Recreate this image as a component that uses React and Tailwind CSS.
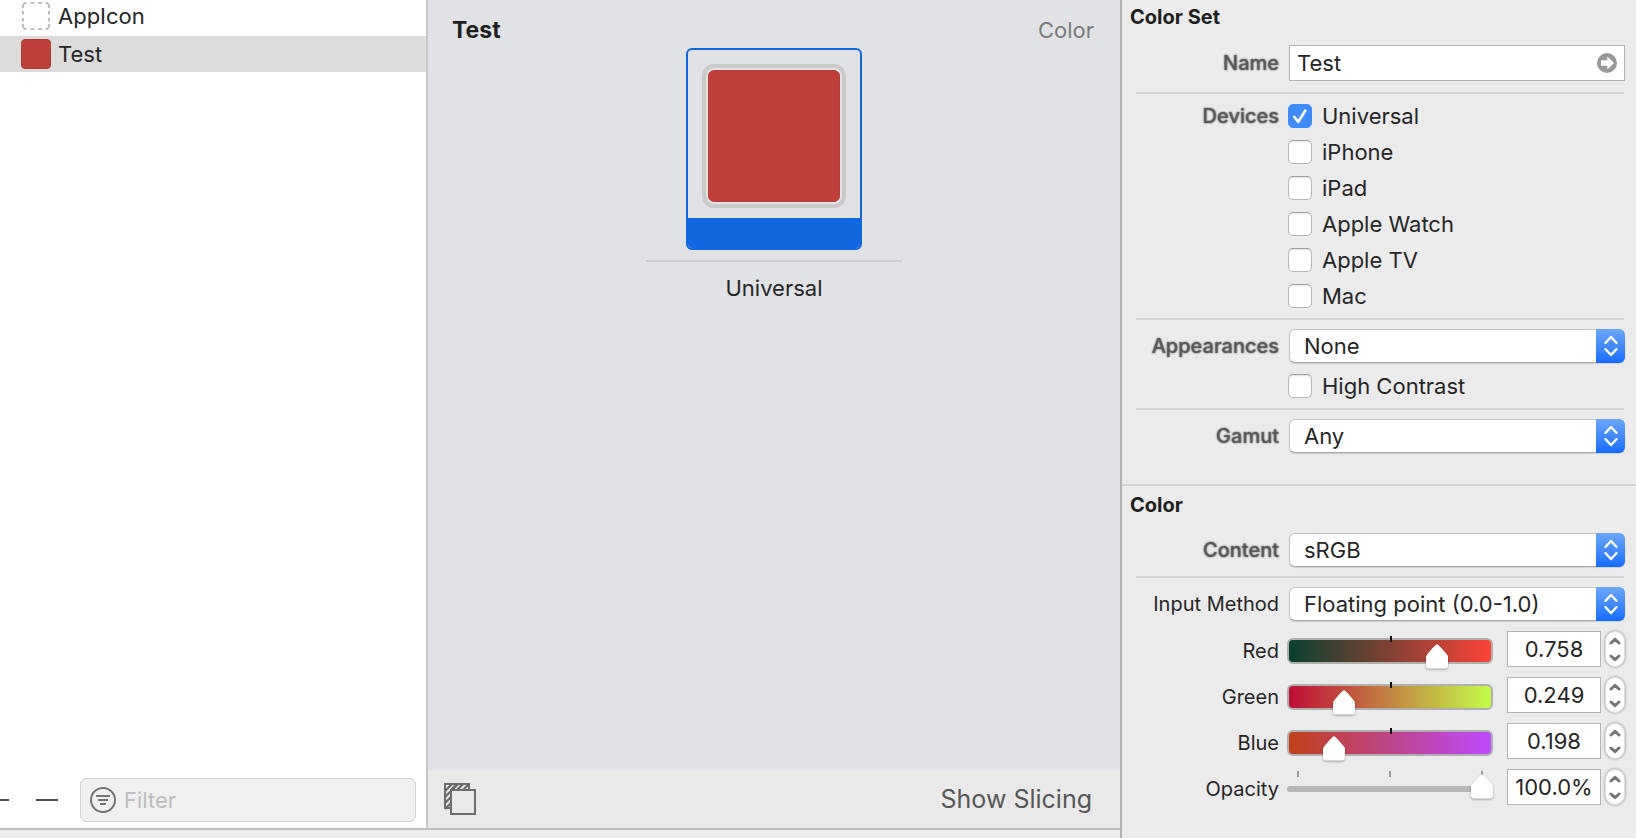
import { useState } from "react";

const font = "font-['Inter','Liberation_Sans',sans-serif]";

function Label({ children, htmlFor, soft }) {
  const tone = soft
    ? "text-[#555555]/30 [text-shadow:0_0_1px_#555555,0_0_2px_#777777] font-medium"
    : "text-[#262626]";
  return (
    <label htmlFor={htmlFor} className={`w-[157px] shrink-0 text-right text-xl leading-6 ${tone}`}>
      {children}
    </label>
  );
}

function Divider() {
  return <hr className="ml-[14px] mr-3 h-[2px] border-0 bg-[#d4d4d4]" />;
}

function SelectRow({ id, label, soft, options }) {
  return (
    <div className="flex h-[34px] items-center pr-[11px]">
      <Label htmlFor={id} soft={soft}>{label}</Label>
      <div className="relative ml-[10px] h-[34px] min-w-0 flex-1">
        <select
          id={id}
          className="h-full w-full appearance-none rounded-md border border-[#c4c4c4] border-b-[#a8a8a8] bg-white pl-[14px] pr-8 text-[22px] leading-7 text-[#262626] shadow-[0_1px_1px_rgba(0,0,0,0.12)] outline-none"
        >
          {options.map((o) => (
            <option key={o}>{o}</option>
          ))}
        </select>
        <span className="pointer-events-none absolute inset-y-0 right-0 flex w-[29px] items-center justify-center rounded-r-md bg-linear-to-b from-[#6ba6f8] to-[#146bfe]">
          <svg width="14" height="22" viewBox="0 0 14 22" fill="none" stroke="#fff" strokeWidth="2.4" strokeLinecap="round" strokeLinejoin="round">
            <path d="M1.600 7.800 7 2 12.400 7.800M1.600 14.200 7 20 12.400 14.200" />
          </svg>
        </span>
      </div>
    </div>
  );
}

function CheckRow({ id, label, defaultChecked }) {
  return (
    <div className="flex h-9 items-center">
      <span className="relative flex h-6 w-6">
        <input
          id={id}
          type="checkbox"
          defaultChecked={defaultChecked}
          className="peer h-6 w-6 appearance-none rounded-[5px] border border-[#b9b9b9] border-t-[#9f9f9f] bg-white shadow-[inset_0_1px_2px_rgba(0,0,0,0.12)] checked:border-[#3f8af9] checked:bg-[#408bfa] checked:shadow-none"
        />
        <svg className="pointer-events-none absolute inset-0 hidden peer-checked:block" width="24" height="24" viewBox="0 0 24 24" fill="none" stroke="#fff" strokeWidth="2.6" strokeLinecap="round" strokeLinejoin="round">
          <path d="M6.300 13 10.300 17.800 17.300 6.500" />
        </svg>
      </span>
      <label htmlFor={id} className="ml-[10px] text-[22px] leading-7 text-[#262626]">{label}</label>
    </div>
  );
}

function Thumb({ value, className }) {
  return (
    <svg
      className={`pointer-events-none absolute overflow-visible drop-shadow-[0_1px_1px_rgba(0,0,0,0.35)] ${className}`}
      style={{ left: `calc(${value} * (100% - 22px))` }}
      width="22"
      height="25"
      viewBox="0 0 22 25"
      fill="#fff"
    >
      <path d="M11 .3c.5 0 .9.300 1.300.700C16 4.500 19 7.800 21.400 11.300c.4.600.6 1.100.6 1.800V21.500a3 3 0 0 1-3 3H3a3 3 0 0 1-3-3V13.100c0-.7.2-1.200.6-1.800C3 7.800 6 4.500 9.700 1c.4-.4.8-.7 1.300-.7z" />
    </svg>
  );
}

function Stepper({ label, onStep }) {
  return (
    <div className="ml-1 flex h-9 w-5 flex-col overflow-hidden rounded-full border border-[#dddddd] bg-white shadow-[0_0_3px_rgba(0,0,0,0.4)]">
      <button type="button" aria-label={`Increase ${label}`} onClick={() => onStep(1)} className="flex flex-1 items-center justify-center">
        <svg width="12" height="8" viewBox="0 0 12 8" fill="none" stroke="#757575" strokeWidth="3" strokeLinecap="round" strokeLinejoin="round">
          <path d="M2 6 6 2.400 10 6" />
        </svg>
      </button>
      <button type="button" aria-label={`Decrease ${label}`} onClick={() => onStep(-1)} className="flex flex-1 items-center justify-center">
        <svg width="12" height="8" viewBox="0 0 12 8" fill="none" stroke="#757575" strokeWidth="3" strokeLinecap="round" strokeLinejoin="round">
          <path d="M2 2 6 5.600 10 2" />
        </svg>
      </button>
    </div>
  );
}

function ChannelRow({ id, label, initial, gradient, percent }) {
  const [value, setValue] = useState(initial);
  const text = percent ? `${(value * 100).toFixed(1)}%` : value.toFixed(3);
  const step = (d) => setValue((v) => Math.min(1, Math.max(0, v + d * 0.01)));
  return (
    <div className="flex h-9 items-center pr-[11px]">
      <div className="flex h-9 min-w-0 flex-1 items-center pt-1">
        <Label htmlFor={id}>{label}</Label>
        <div className="relative ml-2 flex h-[26px] min-w-0 flex-1 items-center">
          {gradient ? (
            <>
              <div className={`h-full w-full rounded-md border-2 border-[#b0b0b0] bg-linear-to-r/srgb bg-origin-border ${gradient}`} />
              <span className="absolute -top-[2px] left-1/2 h-[6px] w-[2px] bg-[#111111]" />
              <Thumb value={value} className="top-[6px]" />
            </>
          ) : (
            <>
              <div className="mr-2 h-[6px] w-full rounded-full bg-[#b7b7b7]" />
              <div className="absolute inset-x-[10px] -top-[5px] flex justify-between">
                <span className="h-[6px] w-[2px] bg-[#9a9a9a]" />
                <span className="h-[6px] w-[2px] bg-[#9a9a9a]" />
                <span className="h-[6px] w-[2px] bg-[#9a9a9a]" />
              </div>
              <Thumb value={value} className="-top-[2px]" />
            </>
          )}
          <input
            id={id}
            type="range"
            min="0"
            max="1"
            step="0.001"
            value={value}
            onChange={(e) => setValue(Number(e.target.value))}
            className="absolute inset-0 h-full w-full cursor-pointer opacity-0"
          />
        </div>
      </div>
      <input
        type="text"
        aria-label={`${label} value`}
        value={text}
        readOnly
        className="ml-[14px] h-9 w-[94px] border border-[#b3b3b3] bg-white text-center text-[22px] leading-7 text-[#262626] outline-none"
      />
      <Stepper label={label} onStep={step} />
    </div>
  );
}

function Sidebar() {
  return (
    <aside className="flex w-[428px] shrink-0 flex-col border-r-2 border-[#c6c7c7] bg-white">
      <ul className="flex flex-1 flex-col gap-1 text-[22px] leading-7 text-[#262626]">
        <li className="flex h-8 items-center pl-[21px]">
          <svg width="30" height="30" viewBox="0 0 30 30" fill="none" stroke="#b5b5b5" strokeWidth="1.800">
            <path d="M1.900 7V5.500A3.600 3.600 0 0 1 5.500 1.900M24.500 1.900A3.600 3.600 0 0 1 28.100 5.500V7M28.100 23v1.500a3.600 3.600 0 0 1-3.600 3.600M5.500 28.100A3.600 3.600 0 0 1 1.900 24.500V23M9.500 1.900h4M17 1.900h4M9.500 28.100h4M17 28.100h4M1.900 10v3.500M1.900 17v3.500M28.100 10v3.500M28.100 17v3.500" />
          </svg>
          <span className="ml-[7px]">AppIcon</span>
        </li>
        <li className="flex h-9 items-center bg-[#dcdcdc] pl-[21px]">
          <span className="h-[30px] w-[30px] rounded-[4px] border border-[#b23b33] bg-[#be4038]" />
          <span className="ml-[7px]">Test</span>
        </li>
      </ul>
      <div className="mb-[6px] flex h-11 items-center pr-[10px]">
        <button type="button" aria-label="Add" className="flex h-11 w-[27px] shrink-0 items-center">
          <svg width="9" height="2" viewBox="0 0 9 2"><path d="M0 0h9v2H0z" fill="#4d4d4d" /></svg>
        </button>
        <button type="button" aria-label="Remove" className="flex h-11 w-10 shrink-0 items-center justify-center">
          <svg width="22" height="2" viewBox="0 0 22 2"><path d="M0 0h22v2H0z" fill="#4d4d4d" /></svg>
        </button>
        <div className="ml-[13px] flex h-11 min-w-0 flex-1 items-center rounded-md border border-[#d0d0d0] bg-[#f0f0f0] pl-[9px]">
          <svg className="shrink-0" width="26" height="26" viewBox="0 0 26 26" fill="none" stroke="#757575" strokeWidth="2">
            <circle cx="13" cy="13" r="12" />
            <path d="M6 9h14M8 13h10M10 17h6" />
          </svg>
          <input
            type="text"
            aria-label="Filter"
            placeholder="Filter"
            className="ml-2 min-w-0 flex-1 bg-transparent text-[22px] leading-7 outline-none placeholder:text-[#bdbdbd]"
          />
        </div>
      </div>
    </aside>
  );
}

function Canvas() {
  return (
    <main className="flex min-w-0 flex-1 flex-col bg-[#e1e2e6]">
      <div className="relative flex flex-1 flex-col items-center pt-12">
        <header className="absolute inset-x-0 top-4 flex items-center justify-between pl-6 pr-[26px] text-[22px] leading-7">
          <h1 className="text-[23px] font-bold text-[#1f1f1f]">Test</h1>
          <span className="text-[#7b7b7d]">Color</span>
        </header>
        <button type="button" aria-label="Universal color" className="relative flex w-44 flex-col overflow-hidden rounded-md border-2 border-[#1167df]">
          <span className="flex w-full justify-center pb-[10px] pt-[14px]">
            <span className="flex h-36 w-36 rounded-xl border-4 border-[#cacaca] p-[2px]">
              <span className="flex-1 rounded-md border border-[#b73d35] bg-[#be4038]" />
            </span>
          </span>
          <span className="h-[30px] w-full bg-[#1167df]" />
        </button>
        <hr className="mt-[10px] h-[2px] w-64 border-0 bg-[#cbccce]" />
        <p className="mt-3 text-[22px] leading-7 text-[#262626]">Universal</p>
      </div>
      <footer className="flex h-[58px] items-center justify-between bg-[#e9e9e9] pl-4 pr-7">
        <button type="button" aria-label="Toggle slices">
          <svg width="32" height="32" viewBox="0 0 32 32" fill="none" stroke="#6c6c6c">
            <path d="M1 1h24v6H7v18H1z" strokeWidth="2" />
            <path d="M1 8 8 1M1 14 14 1M7 7 13 1M13 7l6-6M19 7l6-6M1 20l6-6M1 26l6-6" strokeWidth="2.400" />
            <path d="M7 7h24v24H7z" fill="#e9e9e9" strokeWidth="2" />
          </svg>
        </button>
        <button type="button" className="text-[25px] leading-8 text-[#575757]">Show Slicing</button>
      </footer>
    </main>
  );
}

function Inspector() {
  return (
    <aside className="w-[516px] shrink-0 border-l-2 border-[#b0b1b3] bg-[#ebebeb]">
      <section className="border-b-2 border-[#d2d2d2] pb-[31px]">
        <h2 className="flex h-[34px] items-center pl-2 text-xl leading-6 font-bold text-[#1f1f1f]">Color Set</h2>
        <div className="mt-[11px] mb-[11px] flex h-9 items-center pr-[11px]">
          <Label htmlFor="name" soft>Name</Label>
          <div className="ml-[10px] flex h-9 min-w-0 flex-1 items-center border border-[#b3b3b3] bg-white pl-[7px] pr-[7px]">
            <input id="name" type="text" defaultValue="Test" className="min-w-0 flex-1 bg-transparent text-[22px] leading-7 text-[#262626] outline-none" />
            <button type="button" aria-label="Go to name">
              <svg width="20" height="20" viewBox="0 0 20 20">
                <circle cx="10" cy="10" r="10" fill="#999999" />
                <path d="M4 7.300h6.300V3.400L17 10l-6.700 6.600v-3.900H4z" fill="#fff" />
              </svg>
            </button>
          </div>
        </div>
        <Divider />
        <div role="group" aria-label="Devices" className="my-1 flex items-start">
          <span className="flex h-9 items-center"><Label htmlFor="universal" soft>Devices</Label></span>
          <div className="ml-[9px]">
            <CheckRow id="universal" label="Universal" defaultChecked />
            <CheckRow id="iphone" label="iPhone" />
            <CheckRow id="ipad" label="iPad" />
            <CheckRow id="watch" label="Apple Watch" />
            <CheckRow id="tv" label="Apple TV" />
            <CheckRow id="mac" label="Mac" />
          </div>
        </div>
        <Divider />
        <div className="mt-[9px] mb-1">
          <SelectRow id="appearances" label="Appearances" soft options={["None", "Any, Dark", "Any, Light, Dark"]} />
          <div className="mt-[5px] ml-[166px]">
            <CheckRow id="contrast" label="High Contrast" />
          </div>
        </div>
        <Divider />
        <div className="mt-[9px]">
          <SelectRow id="gamut" label="Gamut" soft options={["Any", "sRGB and Display P3"]} />
        </div>
      </section>
      <section>
        <h2 className="flex h-[38px] items-center pl-2 text-xl leading-6 font-bold text-[#1f1f1f]">Color</h2>
        <div className="my-[9px]">
          <SelectRow id="content" label="Content" soft options={["sRGB", "Display P3"]} />
        </div>
        <Divider />
        <div className="mt-[9px] flex flex-col gap-[10px]">
          <SelectRow id="method" label="Input Method" options={["Floating point (0.0-1.0)", "8-bit (0-255)"]} />
          <ChannelRow id="red" label="Red" initial={0.758} gradient="from-[#06402f] to-[#ff4339]" />
          <ChannelRow id="green" label="Green" initial={0.249} gradient="from-[#c00a38] to-[#c4ff4a]" />
          <ChannelRow id="blue" label="Blue" initial={0.198} gradient="from-[#c04015] to-[#bd4aff]" />
          <ChannelRow id="opacity" label="Opacity" initial={1} percent />
        </div>
      </section>
    </aside>
  );
}

export default function App() {
  return (
    <div className={`flex min-h-screen bg-[#ebebeb] ${font}`}>
      <div className="flex min-w-0 flex-1 flex-col">
        <div className="flex flex-1">
          <Sidebar />
          <Canvas />
        </div>
        <div className="h-[10px] border-t-2 border-[#bebebe] bg-[#ececec]" />
      </div>
      <Inspector />
    </div>
  );
}
